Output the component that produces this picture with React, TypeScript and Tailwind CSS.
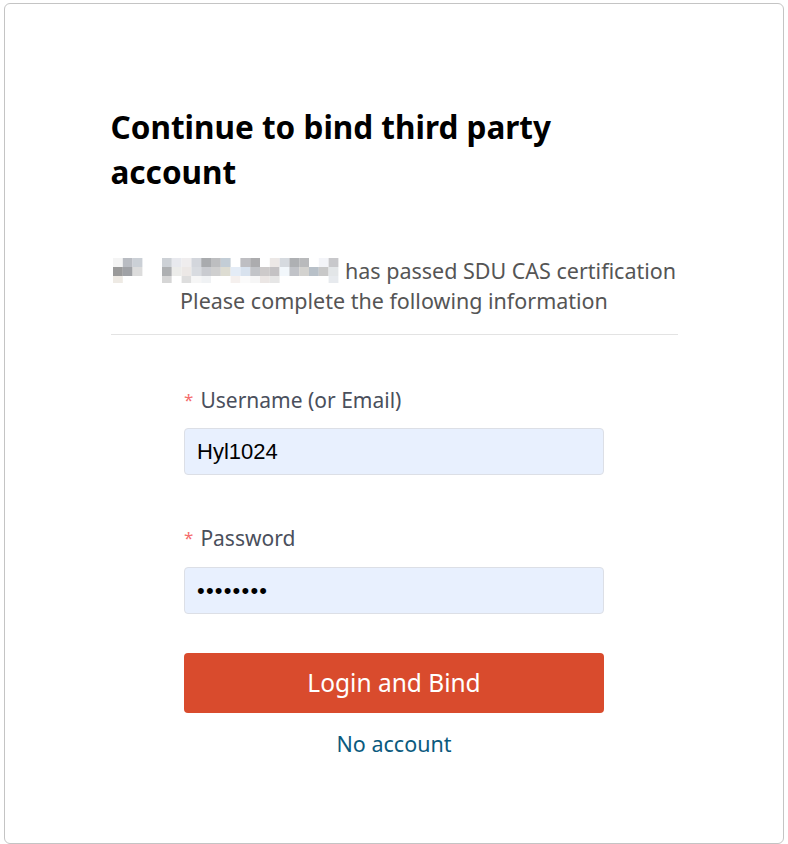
import React from "react";

const mosaic: string[][] = [
  ["#f4f4f4", "#b9bcc2", "#cbd0d6", "", "", "#cdd1d6", "#e8e9ee", "#efedee", "#d3d6dc", "#a9abae", "#bdbec0", "#c3cdd6", "", "#bebec2", "#acacae", "", "#ece8e6", "#d6dadf", "#aeb0b3", "#b9babc", "", "#f3f4f8", "#c8c8cb"],
  ["#9a9a9a", "#a0a2a6", "#dcdcdc", "", "", "#aeb0b2", "#ececea", "#ece8e6", "#d8dbe0", "#c9cbd0", "#cfcfcf", "#dddcd2", "#e4ecf6", "#d8e2ee", "#c2c4c8", "#cdcaca", "#c4c2c4", "#f2f7fb", "#c1c3c8", "#d3d2cf", "#b8c0c8", "#c8c8c8", "#e3e6e8"],
  ["#eeeae4", "", "", "", "", "#d6d6d6", "#ffffff", "#dedede", "#f6f6f6", "#f0f2f4", "", "", "#f5f0ee", "#fbfbfb", "#f6f6f6", "#ebe6e4", "#e6e6e6", "", "", "", "", "", "#e7eaee"],
];

function Mosaic() {
  const w = 9.8;
  return (
    <svg width="230" height="26" viewBox="0 0 230 26" className="inline-block shrink-0">
      {mosaic.map((row, r) =>
        row.map((c, i) =>
          c ? (
            <rect
              key={`${r}-${i}`}
              x={1 + i * w}
              y={r * 9}
              width={w}
              height={r === 2 ? 7 : 9}
              fill={c}
            />
          ) : null
        )
      )}
    </svg>
  );
}

export default function App() {
  return (
    <div
      className="w-[788px] h-[844px] bg-white pt-[3px] px-[4px]"
      style={{ fontFamily: '"Noto Sans", "Open Sans", sans-serif' }}
    >
      <div className="h-[841px] border border-[#c4c4c4] rounded-[6px] bg-white">
        <div className="w-[567px] mx-auto pt-[100px]">
          <h1 className="max-w-[480px] text-[31.5px] leading-[45px] font-bold text-black">
            Continue to bind third party account
          </h1>
          <div className="mt-[62px] text-center text-[21.5px] leading-[30px] text-[#555]">
            <div className="flex items-center justify-center gap-[3px] whitespace-nowrap">
              <Mosaic />
              <span>has passed SDU CAS certification</span>
            </div>
            <div className="whitespace-nowrap">Please complete the following information</div>
          </div>
          <div className="mt-[18px] h-px bg-[#e3e3e3]" />
          <form className="w-[420px] mx-auto mt-[50px]">
            <label className="flex items-center text-[21px] leading-[30px] text-[#4a4f5c]">
              <span className="text-[#f56c6c] text-[17px] mr-[7px]">*</span>
              Username (or Email)
            </label>
            <div className="mt-[13px] h-[47px] rounded-[4px] border border-[#dcdfe6] bg-[#e8f0fe] flex items-center px-[12px] text-[22px] text-black" style={{ fontFamily: '"Liberation Sans", Arial, sans-serif' }}>
              Hyl1024
            </div>
            <label className="mt-[48px] flex items-center text-[21px] leading-[30px] text-[#4a4f5c]">
              <span className="text-[#f56c6c] text-[17px] mr-[7px]">*</span>
              Password
            </label>
            <div className="mt-[14px] h-[47px] rounded-[4px] border border-[#dcdfe6] bg-[#e8f0fe] flex items-center px-[12px] text-[22px] text-black tracking-[1.2px]" style={{ fontFamily: '"Liberation Sans", Arial, sans-serif' }}>
              ••••••••
            </div>
            <button
              type="button"
              className="mt-[39px] w-full h-[60px] rounded-[4px] bg-[#d94b2d] text-white text-[24.5px] flex items-center justify-center"
            >
              Login and Bind
            </button>
            <div className="mt-[16px] text-center text-[21.5px] leading-[30px] text-[#0b5a7e]">
              No account
            </div>
          </form>
        </div>
      </div>
    </div>
  );
}
